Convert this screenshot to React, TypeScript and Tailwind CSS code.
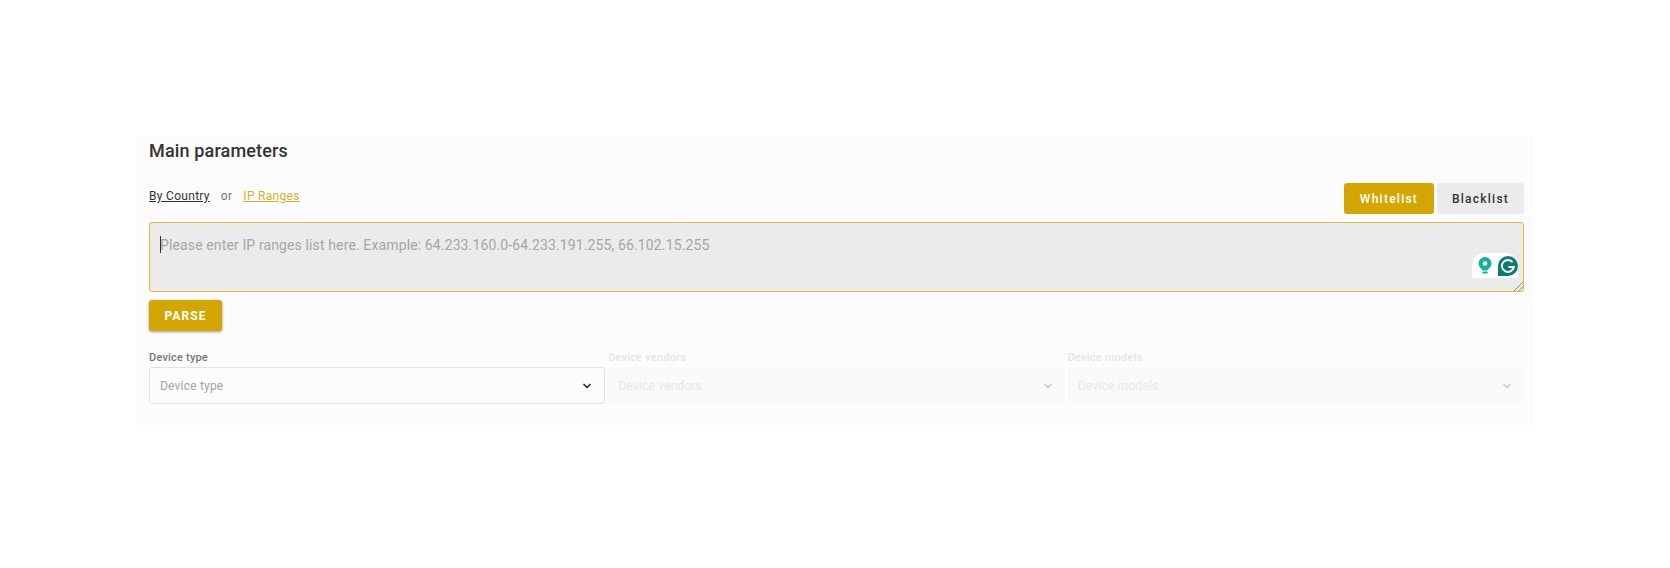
import { ChevronDown } from "lucide-react";

const GrammarlyBadge = () => {
  return (
    <div className="absolute right-[6px] bottom-[14px] flex h-[25px] w-[46px] items-center justify-end gap-[6px] rounded-t-[12px] rounded-bl-[2px] bg-white">
      <svg width="14" height="17" viewBox="0 0 14 17">
        <circle cx="7" cy="6.5" r="6.5" fill="#15b09a" />
        <path d="M3.5 11h7l-1 2.6h-5z" fill="#15b09a" />
        <rect x="4.2" y="14.6" width="5.6" height="2" rx="1" fill="#15b09a" />
        <circle cx="7" cy="6.5" r="2.3" fill="#fff" />
      </svg>
      <svg width="20" height="20" viewBox="0 0 20 20">
        <path d="M10 0a10 10 0 0 1 0 20H0V10A10 10 0 0 1 10 0z" fill="#0c7c6c" />
        <path d="M14.6 6.2A6 6 0 1 0 15.8 11H10.5" fill="none" stroke="#fff" strokeWidth="2" />
      </svg>
    </div>
  );
};

const SelectField = ({ label, disabled }: { label: string; disabled?: boolean }) => {
  return (
    <div className="min-w-0 flex-1">
      <div className={`mb-[2px] h-[14px] text-[11px] leading-[14px] tracking-[0.2px] ${disabled ? "text-[#e6e6e6]" : "text-[#757575]"}`}>
        <span className="font-medium">{label}</span>
      </div>
      <div
        className={`flex h-[37px] items-center justify-between rounded-[3px] pr-[11px] pl-[10px] text-[12px] tracking-[0.2px] ${
          disabled
            ? "bg-[#f9f9f9] text-[#e8e8e8]"
            : "border border-[#e4e4e4] bg-[#fcfcfc] text-[#a3a3a3]"
        }`}
      >
        <span>{label}</span>
        <ChevronDown
          className={`h-3 w-3 ${disabled ? "text-[#c9c9c9]" : "text-[#333333]"}`}
          strokeWidth={3.5}
        />
      </div>
    </div>
  );
};

const App = () => {
  return (
    <div className="h-[568px] w-[1670px] bg-white pt-[136px] pl-[136px] font-['Roboto',sans-serif]">
      <div className="h-[295px] w-[1398px] bg-[#fcfcfc] pr-[10px] pl-[13px]">
        <h2 className="h-[30px] text-[18px] leading-[30px] font-medium tracking-[0.15px] text-[#333333]">Main parameters</h2>
        <div className="mt-[17px] flex items-start justify-between">
          <div className="flex items-center pt-[5px] text-[12px] leading-[16px] tracking-[0.3px]">
            <a className="text-[#333333] underline">By Country</a>
            <span className="mx-[11px] text-[#757575]">or</span>
            <a className="text-[#d9ae2e] underline">IP Ranges</a>
          </div>
          <div className="flex gap-[3px]">
            <button className="h-[31px] w-[90px] rounded-[3px] bg-[#d4a603] text-[12px] font-medium tracking-[1.25px] text-white">
              Whitelist
            </button>
            <button className="h-[31px] w-[87px] rounded-[3px] bg-[#ebebeb] text-[12px] font-medium tracking-[1.25px] text-[#333333]">
              Blacklist
            </button>
          </div>
        </div>
        <div className="relative mt-[8px] h-[70px]">
          <textarea
            readOnly
            placeholder="Please enter IP ranges list here. Example: 64.233.160.0-64.233.191.255, 66.102.15.255"
            className="block h-[70px] w-full resize-none rounded-[3px] border border-[#e0b93c] bg-[#ebebeb] px-[10px] py-[12px] text-[14px] leading-[20px] tracking-[0.125px] text-[#333333] outline-none placeholder:text-[#a6a6a6]"
          />
          <span className="absolute top-[14px] left-[11px] h-[17px] w-[1px] bg-[#333333]" />
          <GrammarlyBadge />
          <svg className="absolute right-[1px] bottom-[1px]" width="10" height="10" viewBox="0 0 10 10">
            <path d="M1 10L10 1M5.5 10L10 5.5" stroke="#8a8a8a" strokeWidth="1" />
          </svg>
        </div>
        <button className="mt-[8px] h-[31px] w-[73px] rounded-[3px] bg-[#d4a603] text-[12px] font-bold tracking-[1.1px] text-white shadow-[0_1px_3px_rgba(0,0,0,0.4)]">
          PARSE
        </button>
        <div className="mt-[20px] flex gap-[3px]">
          <SelectField label="Device type" />
          <SelectField label="Device vendors" disabled />
          <SelectField label="Device models" disabled />
        </div>
      </div>
    </div>
  );
};

export default App;
